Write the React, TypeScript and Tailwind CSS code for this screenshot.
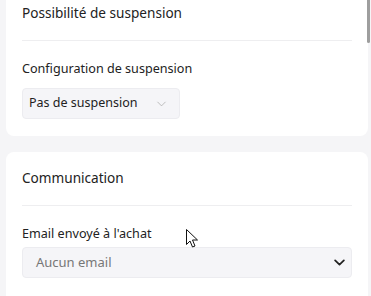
import React from "react";

function Chevron({ className }: { className?: string }) {
    return (
        <svg viewBox="0 0 12 8" className={className} fill="none">
            <path d="M1 1.5l5 5 5-5" stroke="currentColor" strokeLinecap="round" strokeLinejoin="round" />
        </svg>
    );
}

function Cursor() {
    return (
        <svg width="13" height="20" viewBox="0 0 13 20" className="absolute left-[186px] top-[229px]">
            <path d="M0.5 0.5v15l3.5-3.5 2.5 6 2.5-1-2.5-6h5z" fill="#fff" stroke="#111" strokeWidth="1" strokeLinejoin="miter" />
        </svg>
    );
}

export default function App() {
    return (
        <div className="relative h-[296px] w-[371px] overflow-hidden bg-[#f5f5f7] font-['Noto_Sans',sans-serif] text-[#222]">
            <div className="-mt-[13px] flex flex-col gap-4 pl-[6px] pr-[3px]">
                {/* Suspension */}
                <div className="rounded-lg bg-white px-4 pb-[17px]">
                    <div className="flex h-[54px] items-center border-b border-[#eeeef0] text-[13.6px]">
                        Possibilité de suspension
                    </div>
                    <div className="pt-[19px] text-[12.6px] leading-[18px]">Configuration de suspension</div>
                    <div className="mt-[10px] flex h-[31px] w-[158px] items-center gap-[19px] rounded border border-[#ececf0] bg-[#f5f5f8] pl-[6px] text-[12.5px]">
                        <span>Pas de suspension</span>
                        <Chevron className="h-[6px] w-[11px] text-[#aaa]" />
                    </div>
                </div>

                {/* Communication */}
                <div className="h-[200px] rounded-lg bg-white px-4">
                    <div className="flex h-[54px] items-center border-b border-[#eeeef0] text-[13.6px]">
                        Communication
                    </div>
                    <div className="pt-[19px] text-[12.6px] leading-[18px]">Email envoyé à l'achat</div>
                    <div className="mt-[4px] flex h-[31px] items-center justify-between rounded border border-[#ececf0] bg-[#f5f5f8] pl-[13px] pr-[6px] text-[13px] text-[#777]">
                        <span>Aucun email</span>
                        <Chevron className="h-[7px] w-[11px] text-[#222] [stroke-width:2]" />
                    </div>
                </div>
            </div>

            {/* overlay scrollbar thumb */}
            <div className="absolute right-[1px] top-0 h-[43px] w-[3px] rounded-b bg-[#9e9e9e]" />
            <Cursor />
        </div>
    );
}
